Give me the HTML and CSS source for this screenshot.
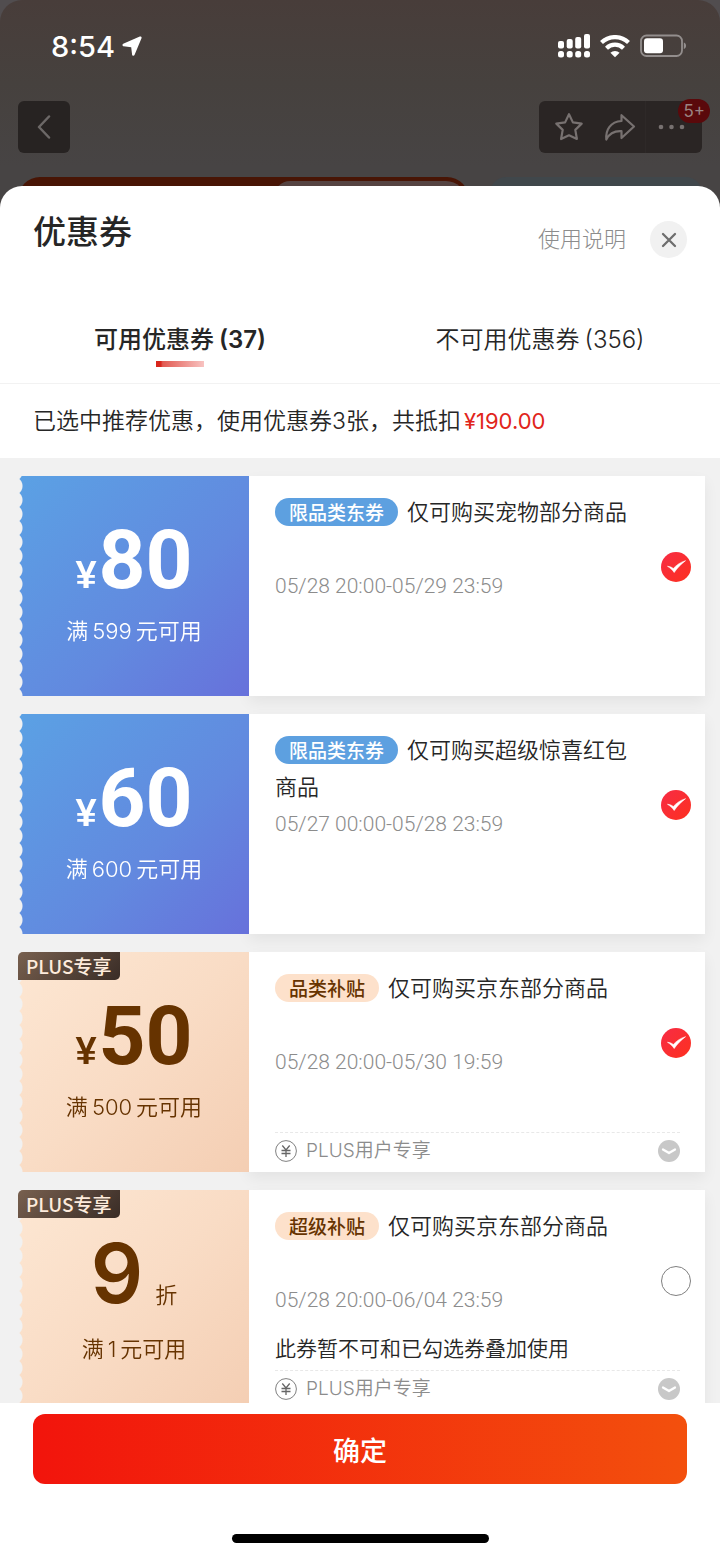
FILE: index.html
```html
<!DOCTYPE html>
<html lang="zh-CN">
<head>
<meta charset="utf-8">
<meta name="viewport" content="width=device-width, initial-scale=1">
<title>优惠券</title>
<link rel="stylesheet" href="styles.css">
</head>
<body>
<div class="screen">
  <header class="backdrop">
    <div class="status">
      <div class="status-time">
        <span>8:54</span>
        <svg width="20" height="20" viewBox="0 0 20 20" aria-hidden="true"><path d="M17.800.5 1.200 7.800c-1.100.5-.9 2.300.4 2.500l7.600 1 .9 7.400c.2 1.200 1.900 1.400 2.400.3L19.500 2.200c.5-1.100-.6-2.200-1.700-1.700z" fill="#fff"/></svg>
      </div>
      <div class="status-icons">
        <svg width="33" height="24" viewBox="0 0 33 24" fill="#fff" aria-hidden="true">
          <rect x="1" y="7" width="6" height="7.500" rx="2"/><rect x="9.700" y="5" width="6" height="9.500" rx="2"/><rect x="18.200" y="3" width="6" height="11.500" rx="2"/><rect x="27" y="0" width="6" height="14.500" rx="2"/>
          <rect x="1" y="17" width="6" height="6.500" rx="2.500"/><rect x="9.700" y="17" width="6" height="6.500" rx="2.500"/><rect x="18.200" y="17" width="6" height="6.500" rx="2.500"/><rect x="27" y="17" width="6" height="6.500" rx="2.500"/>
        </svg>
        <svg width="30" height="23" viewBox="0 0 30 23" aria-hidden="true">
          <g fill="none" stroke="#fff" stroke-width="4.200"><path d="M1.500 7.500a19.500 19.500 0 0 1 27 0"/><path d="M6.500 13.200a12 12 0 0 1 17 0"/></g>
          <path d="M15 22.300l-4.600-4.500a6.800 6.800 0 0 1 9.200 0z" fill="#fff"/>
        </svg>
        <svg width="47" height="24" viewBox="0 0 47 24" aria-hidden="true">
          <rect x="1" y="1.500" width="41" height="20.500" rx="5.500" fill="none" stroke="#938e8d" stroke-width="1.800"/>
          <rect x="4" y="4.300" width="19" height="15" rx="3" fill="#fff"/>
          <path d="M43.800 8.500c3 1 3 5.500 0 6.500z" fill="#938e8d"/>
        </svg>
      </div>
    </div>
    <nav class="topnav">
      <button class="nav-back" type="button" aria-label="返回">
        <svg width="14" height="24" viewBox="0 0 14 24"><path d="M12 1.500 2 12l10 10.500" fill="none" stroke="#6c6867" stroke-width="2.500" stroke-linecap="round" stroke-linejoin="round"/></svg>
      </button>
      <div class="nav-actions">
        <button class="nav-btn" type="button" aria-label="收藏">
          <svg width="30" height="30" viewBox="0 0 30 30"><path d="M15 2.200 18.900 10.400 27.700 11.600 21.300 17.900 22.900 27 15 23.300 7.100 27 8.700 17.900 2.300 11.600 11.100 10.400z" fill="none" stroke="#777170" stroke-width="2.200" stroke-linejoin="round"/></svg>
        </button>
        <button class="nav-btn" type="button" aria-label="分享">
          <svg width="32" height="30" viewBox="0 0 32 30"><path d="M17.500 3.200 30 14.500 17.500 26v-6.800C10.500 18.800 5.500 21 2.300 27.500 1.500 18 6.500 9.500 17.500 9z" fill="none" stroke="#777170" stroke-width="2.200" stroke-linejoin="round"/></svg>
        </button>
        <button class="nav-btn nav-more" type="button" aria-label="更多">
          <svg width="28" height="6" viewBox="0 0 28 6" fill="#777170"><circle cx="3" cy="3" r="2.300"/><circle cx="13.500" cy="3" r="2.300"/><circle cx="24" cy="3" r="2.300"/></svg>
        </button>
        <span class="nav-badge">5+</span>
      </div>
    </nav>
    <div class="peek"><div class="peek-hot"><div class="peek-inner"></div></div><div class="peek-cool"></div></div>
  </header>

  <main class="sheet">
    <div class="sheet-head">
      <h1 class="sheet-title">优惠券</h1>
      <div class="sheet-tools">
        <a class="help" href="#help">使用说明</a>
        <button class="close" type="button" aria-label="关闭">
          <svg width="16" height="16" viewBox="0 0 16 16"><path d="M2 2l12 12M14 2 2 14" stroke="#6e6e6e" stroke-width="2.300" stroke-linecap="round"/></svg>
        </button>
      </div>
    </div>
    <div class="tabs" role="tablist">
      <button class="tab tab-on" type="button" role="tab" aria-selected="true">可用优惠券<span class="count">(37)</span></button>
      <button class="tab" type="button" role="tab" aria-selected="false">不可用优惠券<span class="count">(356)</span></button>
    </div>
    <p class="summary">已选中推荐优惠，使用优惠券3张，共抵扣<span class="saved">¥190.00</span></p>

    <div class="list">
      <article class="coupon blue">
        <div class="face">
          <div class="amount"><span class="yen">¥</span><span class="value">80</span></div>
          <div class="cond">满<span class="num">599</span>元可用</div>
        </div>
        <div class="info">
          <div class="detail">
            <h2 class="name"><span class="tag">限品类东券</span>仅可购买宠物部分商品</h2>
            <p class="date">05/28 20:00-05/29 23:59</p>
          </div>
          <label class="check"><input type="checkbox" aria-label="选择80元券" checked><svg width="30" height="30" viewBox="0 0 30 30"><path d="M6.500 14.300c2.500.2 4.300 1 5.800 2.200 3-3.300 7-6.300 12.200-7.800-4.500 3.500-8.200 7-11.300 11.800-1.700-2.500-3.900-4.500-6.700-6.200z" fill="#fff" stroke="#fff" stroke-width=".6" stroke-linejoin="round"/></svg></label>
        </div>
      </article>

      <article class="coupon blue">
        <div class="face">
          <div class="amount"><span class="yen">¥</span><span class="value">60</span></div>
          <div class="cond">满<span class="num">600</span>元可用</div>
        </div>
        <div class="info">
          <div class="detail">
            <h2 class="name"><span class="tag">限品类东券</span>仅可购买超级惊喜红包商品</h2>
            <p class="date">05/27 00:00-05/28 23:59</p>
          </div>
          <label class="check"><input type="checkbox" aria-label="选择60元券" checked><svg width="30" height="30" viewBox="0 0 30 30"><path d="M6.500 14.300c2.500.2 4.300 1 5.800 2.200 3-3.300 7-6.300 12.200-7.800-4.500 3.500-8.200 7-11.300 11.800-1.700-2.500-3.900-4.500-6.700-6.200z" fill="#fff" stroke="#fff" stroke-width=".6" stroke-linejoin="round"/></svg></label>
        </div>
      </article>

      <article class="coupon plus">
        <span class="ribbon">PLUS专享</span>
        <div class="face">
          <div class="amount"><span class="yen">¥</span><span class="value">50</span></div>
          <div class="cond">满<span class="num">500</span>元可用</div>
        </div>
        <div class="info">
          <div class="detail">
            <h2 class="name"><span class="tag">品类补贴</span>仅可购买京东部分商品</h2>
            <p class="date">05/28 20:00-05/30 19:59</p>
          </div>
          <label class="check"><input type="checkbox" aria-label="选择50元券" checked><svg width="30" height="30" viewBox="0 0 30 30"><path d="M6.500 14.300c2.500.2 4.300 1 5.800 2.200 3-3.300 7-6.300 12.200-7.800-4.500 3.500-8.200 7-11.300 11.800-1.700-2.500-3.900-4.500-6.700-6.200z" fill="#fff" stroke="#fff" stroke-width=".6" stroke-linejoin="round"/></svg></label>
          <button class="more" type="button">
            <svg width="22" height="22" viewBox="0 0 22 22" fill="none"><circle cx="11" cy="11" r="10.400" stroke="#808080"/><path d="M7.300 5.500 11 10l3.700-4.500M11 10v7M6.500 10.500h9M6.500 13.500h9" stroke="#666" stroke-width="1.300"/></svg>
            <span>PLUS用户专享</span>
            <svg class="chev" width="22" height="22" viewBox="0 0 22 22" fill="none"><circle cx="11" cy="11" r="11" fill="#c8c8c8"/><path d="M5 9.500 11 13l6-3.500" stroke="#fff" stroke-width="2.300" stroke-linecap="round" stroke-linejoin="round"/></svg>
          </button>
        </div>
      </article>

      <article class="coupon plus">
        <span class="ribbon">PLUS专享</span>
        <div class="face">
          <div class="amount discount"><span class="value">9</span><span class="unit">折</span></div>
          <div class="cond">满<span class="num">1</span>元可用</div>
        </div>
        <div class="info">
          <div class="detail">
            <h2 class="name"><span class="tag">超级补贴</span>仅可购买京东部分商品</h2>
            <p class="date">05/28 20:00-06/04 23:59</p>
            <p class="note">此券暂不可和已勾选券叠加使用</p>
          </div>
          <label class="check"><input type="checkbox" aria-label="选择9折券"></label>
          <button class="more" type="button">
            <svg width="22" height="22" viewBox="0 0 22 22" fill="none"><circle cx="11" cy="11" r="10.400" stroke="#808080"/><path d="M7.300 5.500 11 10l3.700-4.500M11 10v7M6.500 10.500h9M6.500 13.500h9" stroke="#666" stroke-width="1.300"/></svg>
            <span>PLUS用户专享</span>
            <svg class="chev" width="22" height="22" viewBox="0 0 22 22" fill="none"><circle cx="11" cy="11" r="11" fill="#c8c8c8"/><path d="M5 9.500 11 13l6-3.500" stroke="#fff" stroke-width="2.300" stroke-linecap="round" stroke-linejoin="round"/></svg>
          </button>
        </div>
      </article>
    </div>

    <footer class="actions">
      <button class="confirm" type="button">确定</button>
      <div class="home-bar"></div>
    </footer>
  </main>
</div>
</body>
</html>
```

FILE: styles.css
```css
* { box-sizing: border-box; }

body {
  margin: 0;
  background: #514d4f;
  color: #262626;
  font-family: Inter, "Noto Sans CJK SC", sans-serif;
  font-weight: 350;
}

button {
  border: 0;
  padding: 0;
  background: none;
  color: inherit;
  font: inherit;
  cursor: pointer;
}

h1, h2, p { margin: 0; font-weight: inherit; }
svg { display: block; flex: none; }

.screen {
  display: flex;
  flex-direction: column;
  height: 100vh;
}

/* Dimmed page behind the sheet */
.backdrop {
  flex: none;
  border-radius: 22px 22px 0 0;
  background: linear-gradient(#483d3a, #46413e 40%, #474444 80%);
}

.status {
  display: flex;
  justify-content: space-between;
  align-items: center;
  height: 92px;
  padding: 0 33px 0 51px;
}

.status-time {
  display: flex;
  align-items: center;
  gap: 7px;
  color: #fff;
  font-size: 29px;
  font-weight: 500;
}

.status-icons {
  display: flex;
  align-items: center;
  gap: 10px;
}

.topnav {
  display: flex;
  justify-content: space-between;
  padding: 9px 18px 24px;
}

.nav-back {
  display: grid;
  place-items: center;
  width: 52px;
  height: 52px;
  border-radius: 6px;
  background: #272322;
}

.nav-actions {
  position: relative;
  display: flex;
  align-items: center;
  height: 52px;
  padding-left: 4px;
  border-radius: 6px;
  background: #2a2524;
}

.nav-btn {
  display: grid;
  place-items: center;
  width: 51px;
  height: 52px;
}

.nav-more {
  width: 57px;
  padding-right: 4px;
  border-left: 1px solid #2e2928;
}

.nav-badge {
  position: absolute;
  top: -2px;
  right: -8px;
  padding: 0 5px;
  border-radius: 12px;
  background: #5a090b;
  color: #9a8583;
  font-size: 17px;
  line-height: 24px;
  font-weight: 400;
}

.peek {
  display: flex;
  justify-content: space-between;
  height: 31px;
  padding: 0 18px;
}

.peek-hot {
  display: flex;
  justify-content: flex-end;
  width: 66%;
  padding: 4px 3px 0 0;
  border-radius: 22px 22px 0 0;
  background: #481505;
}

.peek-inner {
  width: 43%;
  border-radius: 16px 20px 0 0;
  background: #554341;
}

.peek-cool {
  width: 31%;
  border-radius: 16px 16px 0 0;
  background: #40474b;
}

/* Coupon sheet */
.sheet {
  position: relative;
  display: flex;
  flex: 1;
  flex-direction: column;
  min-height: 0;
  margin-top: -22px;
  border-radius: 22px 22px 0 0;
  background: #fff;
}

.sheet-head {
  display: flex;
  justify-content: space-between;
  padding: 22px 33px 0;
}

.sheet-title {
  font-size: 33px;
  line-height: 48px;
  font-weight: 500;
}

.sheet-tools {
  display: flex;
  align-items: center;
  gap: 24px;
  padding-top: 13px;
}

.help {
  color: #8c8c8c;
  font-size: 22px;
  font-weight: 300;
  line-height: 37px;
  text-decoration: none;
}

.close {
  display: grid;
  place-items: center;
  width: 37px;
  height: 37px;
  border-radius: 50%;
  background: #f1f1f1;
}

.tabs {
  display: grid;
  grid-template-columns: 1fr 1fr;
  margin-top: 63px;
  border-bottom: 1px solid #f2f2f2;
}

.tab {
  position: relative;
  height: 62px;
  padding-bottom: 24px;
  font-size: 24px;
  line-height: 38px;
}

.tab-on { font-weight: 500; }

.tab-on::after {
  content: "";
  position: absolute;
  left: 50%;
  bottom: 16px;
  width: 48px;
  height: 6px;
  margin-left: -24px;
  background: linear-gradient(90deg, #d8261c, #d8261c 10%, #e25a52 14%, #f8c3c1);
}

.count { margin-left: 5px; }
.tab-on .count { font-weight: 600; }

.summary {
  padding: 18px 33px;
  font-size: 23px;
  line-height: 38px;
}

.saved {
  margin-left: 3px;
  color: #e1251b;
  font-size: 22px;
  font-weight: 400;
}

.list {
  display: flex;
  flex: 1;
  flex-direction: column;
  gap: 18px;
  min-height: 0;
  padding: 18px 15px 18px 19px;
  overflow-y: auto;
  scrollbar-width: none;
  background: #f1f1f1;
}

.coupon {
  position: relative;
  display: flex;
  flex: none;
  min-height: 220px;
}

.face {
  display: flex;
  flex: none;
  flex-direction: column;
  align-items: center;
  width: 230px;
  padding-top: 46px;
  -webkit-mask: radial-gradient(circle at -6px 7px, transparent 9px, #000 10px) 0 3px / 100% 14px repeat-y;
  mask: radial-gradient(circle at -6px 7px, transparent 9px, #000 10px) 0 3px / 100% 14px repeat-y;
}

.blue .face {
  background: linear-gradient(135deg, #5ba1e4, #6289df 60%, #6771db);
  color: #fff;
}

.plus .face {
  background: linear-gradient(135deg, #fde7d3, #f9dcc5 50%, #f4ceb3);
  color: #663300;
}

.amount {
  display: flex;
  align-items: baseline;
  gap: 2px;
  font-family: Roboto, sans-serif;
  font-weight: 700;
  line-height: 76px;
}

.yen {
  font-family: "Liberation Sans", sans-serif;
  font-size: 38px;
}

.value { font-size: 82px; }

.discount { gap: 12px; }
.discount .value { font-family: Inter, sans-serif; font-weight: 600; }

.unit {
  font-family: "Noto Sans CJK SC", sans-serif;
  font-size: 22px;
  font-weight: 350;
}

.cond {
  font-size: 22px;
  line-height: 37px;
}

.num { margin: 0 4px; }

.ribbon {
  position: absolute;
  z-index: 1;
  top: 0;
  left: -1px;
  padding: 0 8px;
  border-radius: 5px 0 5px 0;
  background: linear-gradient(135deg, #78604f, #392c26);
  color: #fdebdc;
  font-family: "Noto Sans CJK SC", sans-serif;
  font-size: 19px;
  font-weight: 500;
  line-height: 28px;
}

.info {
  display: grid;
  flex: 1;
  grid-template-columns: 1fr 30px;
  grid-template-rows: 1fr auto;
  column-gap: 16px;
  min-width: 0;
  padding: 18px 14px 0 26px;
  background: #fff;
  box-shadow: 0 6px 14px rgba(0, 0, 0, 0.06);
}

.name {
  min-height: 74px;
  font-size: 22px;
  line-height: 37px;
}

.tag {
  display: inline-block;
  margin-right: 9px;
  padding: 3px 14px 0;
  border-radius: 14px;
  font-size: 19px;
  font-weight: 500;
  line-height: 25px;
}

.blue .tag { background: #5da0e0; color: #fff; }
.plus .tag { background: #fde1cb; color: #663300; }

.date {
  color: #8c8c8c;
  font-family: Roboto, sans-serif;
  font-size: 21px;
  font-weight: 300;
  line-height: 37px;
}

.note {
  margin-top: 16px;
  font-size: 21px;
  line-height: 28px;
}

.check {
  display: grid;
  margin-top: 58px;
  align-self: start;
}

.check input,
.check svg { grid-area: 1 / 1; }

.check svg { pointer-events: none; }

.check input {
  appearance: none;
  width: 30px;
  height: 30px;
  margin: 0;
  border: 1px solid #808080;
  border-radius: 50%;
  background: #fff;
}

.check input:checked {
  border: 0;
  background: linear-gradient(135deg, #f72c45, #fd301f);
}

.more {
  display: flex;
  grid-column: 1 / -1;
  align-items: center;
  gap: 9px;
  height: 40px;
  margin-right: 11px;
  padding-bottom: 4px;
  border-top: 1px dashed #e8e8e8;
  color: #8c8c8c;
  font-size: 19px;
  line-height: 22px;
}

.chev { margin-left: auto; }

.actions {
  display: flex;
  flex: none;
  flex-direction: column;
  align-items: center;
  gap: 50px;
  padding: 11px 33px 15px;
}

.confirm {
  width: 100%;
  height: 70px;
  border-radius: 12px;
  background: linear-gradient(90deg, #f2140c, #f3500d);
  color: #fff;
  font-size: 27px;
  font-weight: 500;
}

.home-bar {
  width: 257px;
  height: 9px;
  border-radius: 5px;
  background: #000;
}
```
